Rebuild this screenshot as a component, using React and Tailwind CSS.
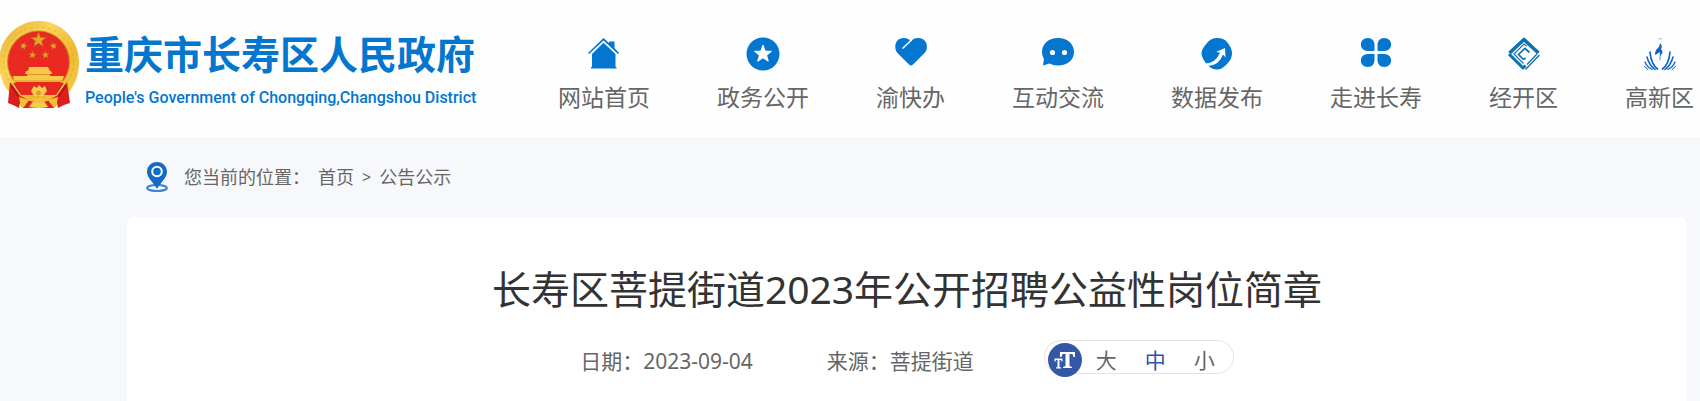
import React from "react";

const STAR = "M0-10 2.4-3.2 9.5-3.1 3.9 1.3 5.9 8.1 0 4.1-5.9 8.1-3.9 1.3-9.5-3.1-2.4-3.2Z";

function Emblem() {
  return (
    <svg viewBox="0 0 80 90" className="h-[90px] w-20 shrink-0" aria-hidden="true">
      <defs>
        <linearGradient id="gold" x1="0" y1="0" x2="1" y2="1">
          <stop offset="0" stopColor="#e3b02c" />
          <stop offset="0.35" stopColor="#fbd45a" />
          <stop offset="0.65" stopColor="#efb931" />
          <stop offset="1" stopColor="#f9d050" />
        </linearGradient>
      </defs>
      <path d="M39 0C61 0 79 18 79 41C79 57 73 68 64 76L58 84H20L14 76C5 68-1 57-1 41C-1 18 17 0 39 0Z" fill="url(#gold)" />
      <circle cx="38.500" cy="41" r="35" fill="none" stroke="#d69a1e" strokeWidth="1" strokeDasharray="3 3" opacity="0.5" />
      <circle cx="38.500" cy="41" r="31.500" fill="#c98b20" />
      <circle cx="38.500" cy="41" r="30.500" fill="#ea2a22" />
      <g fill="#e5a72b" stroke="#b97418" strokeWidth="0.8">
        <path d={STAR} transform="translate(38.500 19) scale(.78)" />
        <path d={STAR} transform="translate(23.500 25) rotate(15) scale(.38)" />
        <path d={STAR} transform="translate(53.500 25) rotate(-15) scale(.38)" />
        <path d={STAR} transform="translate(32.500 34) rotate(8) scale(.38)" />
        <path d={STAR} transform="translate(45.500 34) rotate(-8) scale(.38)" />
      </g>
      <path d="M29 46H48L50 50H51L52 53H25L26 50H28ZM27 54H50V55H64L62 61H14L13 55H27Z" fill="#f7c947" />
      <path d="M27 53.500H50M14 60H63" stroke="#d9962a" strokeWidth="1" />
      <path d="M13 62H64L56 74H21Z" fill="#e52a22" />
      <path d="M10 61L21 76L19 87L13 84L8 82ZM67 61L56 76L58 87L64 84L70 82Z" fill="#dc1f1e" />
      <path d="M11 64L18 75M66 64L59 75" stroke="#b8141a" strokeWidth="2" />
      <path d="M19 74L30 80H47L58 74L54 87H23Z" fill="#df241f" />
      <path d="M19 76L29 79L24 86H21ZM58 76L48 79L53 86H56Z" fill="#f0c03a" />
      <path d="M29 86Q39 70 48 86Q39 88 29 86ZM31 70L34 65L37 67L39 64L42 67L45 65L47 70L43 75H34Z" fill="#f8cd4c" />
      <circle cx="38.500" cy="72" r="2.500" fill="#e39a2b" />
      <path d="M26 77Q38 84 51 77" fill="none" stroke="#f4b83d" strokeWidth="2" />
    </svg>
  );
}

function Svg({ children }) {
  return (
    <svg viewBox="0 0 34 34" className="size-[34px]" fill="#0376cf" aria-hidden="true">
      {children}
    </svg>
  );
}

const HomeIcon = () => (
  <Svg>
    <path d="M1 16L16.500 1L22 6V4.500H27.500V11L32 16L31 17L16.500 3.600L2 17Z" />
    <path d="M16.500 5.800L28.500 17V30H29.500V31.500H4V30H5V17Z" />
  </Svg>
);
const StarIcon = () => (
  <Svg>
    <circle cx="17" cy="17" r="16.500" />
    <path d={STAR} transform="translate(17 17) scale(.86)" fill="#fff" stroke="#fff" strokeWidth="1.500" strokeLinejoin="round" />
  </Svg>
);
const HeartIcon = () => (
  <Svg>
    <path d="M17 28.500Q16 28.500 15 27.500L3.500 16C-.5 11.500.5 1 10 1C13 1 15.500 2.500 17 4C19 2 21 1 24 1C33.500 1 35 11.500 30.500 16L19 27.500Q18 28.500 17 28.500Z" />
    <path d="M9 11L17.500 3" stroke="#fff" strokeWidth="1.700" strokeLinecap="round" />
  </Svg>
);
const ChatIcon = () => (
  <Svg>
    <path d="M17 1C26.500 1 33 7 33 15C33 23 26.500 28.500 17 28.500Q12 28.500 8.500 26.500L2 28.500L3 22Q1 19 1 15C1 7 7.500 1 17 1Z" />
    <circle cx="11.500" cy="15.500" r="2.600" fill="#fff" />
    <circle cx="23.500" cy="15.500" r="2.600" fill="#fff" />
  </Svg>
);
const TrendIcon = () => (
  <Svg>
    <path d="M17 1Q24 1 27 5Q32 11 32 16.500Q32 22 27 27Q22 32.500 17 32.500Q12 32.500 7.500 28Q1.500 21 1.500 16.500Q1.500 12 7 6Q11 1 17 1Z" />
    <path d="M5 26.500Q16 26 20 15.500L16 15L25 11L25.500 20.500L23 17.500Q19 28.500 8 29Z" fill="#fff" />
  </Svg>
);
const CloverIcon = () => (
  <Svg>
    <path d="M9 1C13 1 15.500 4 15.500 8V14H9C-.5 14-.5 1 9 1ZM25 1C34.500 1 34.500 14 25 14H18.500V8C18.500 4 21 1 25 1ZM9 17H15.500V23C15.500 27 13 30 9 30C-.5 30-.5 17 9 17ZM18.500 17H25C34.500 17 34.500 30 25 30C21 30 18.500 27 18.500 23Z" />
  </Svg>
);
const DiamondIcon = () => (
  <Svg>
    <g fill="none" stroke="#0b72b4">
      <path d="M2.500 16L17 2.500L31.500 16" strokeWidth="3.600" strokeLinejoin="round" />
      <path d="M2 17L16 31L18.500 28.500" strokeWidth="3" strokeLinejoin="round" />
      <path d="M32.500 18L18.500 32.500M30 17L20 27.500" strokeWidth="1.300" />
      <path d="M19.500 9L17 7L7 17L16.500 26.500" strokeWidth="1.100" />
      <path d="M22.500 15.500L18 11.500L11.500 17.500L16.500 22.500L18.500 21" strokeWidth="1.700" />
    </g>
  </Svg>
);
const LotusIcon = () => (
  <Svg>
    <g fill="none" stroke="#1262c6" strokeLinecap="round">
      <path d="M7 15Q8 27 14.500 32M27 15Q26 27 19.500 32" strokeWidth="1.700" />
      <path d="M4 20Q6 28 12 32.500M30 20Q28 28 22 32.500" strokeWidth="1.500" />
      <path d="M2 25Q4 30 9 32.500M32 25Q30 30 25 32.500" strokeWidth="1.300" />
      <path d="M1.500 29.500L5 32.500M32.500 29.500L29 32.500" strokeWidth="1" />
    </g>
    <path d="M17 6Q20 9 18 12Q21 15 18 18L16.500 21L17 15L14 17L12 18Q12 13 15 11Q17 9 17 6Z" fill="#1262c6" />
    <path d="M16 22L18.500 19L17 24ZM15.500 1.500H19V2.200H15.500Z" fill="#56a5de" />
  </Svg>
);

const NAV = [
  ["网站首页", HomeIcon],
  ["政务公开", StarIcon],
  ["渝快办", HeartIcon],
  ["互动交流", ChatIcon],
  ["数据发布", TrendIcon],
  ["走进长寿", CloverIcon],
  ["经开区", DiamondIcon],
  ["高新区", LotusIcon],
];

function PinIcon() {
  return (
    <svg viewBox="0 0 22 30" className="h-[30px] w-[22px] shrink-0" aria-hidden="true">
      <ellipse cx="11" cy="26" rx="9.800" ry="3" fill="#fff" stroke="#3b87d3" strokeWidth="2.200" />
      <path d="M11 0C17 0 21 4.500 21 10C21 16 14 21 11 27C8 21 1 16 1 10C1 4.500 5 0 11 0Z" fill="#126bc5" />
      <circle cx="11" cy="9.500" r="4.800" fill="none" stroke="#fff" strokeWidth="2" />
    </svg>
  );
}

function TextSizeIcon() {
  return (
    <svg viewBox="0 0 34 34" className="size-[34px]" aria-hidden="true">
      <circle cx="17" cy="17" r="17" fill="#3457a6" />
      <g fill="#fff">
        <path d="M12 9H27V14H25.500L24.500 11H21.500V23L24 24V25H15V24L17.500 23V11H14.500L13.500 14H12Z" />
        <path d="M6.500 15.500H14.500V18.500H13.500L13 17H11.500V24L13 24.500V25.500H8V24.500L9.500 24V17H8L7.500 18.500H6.500Z" />
      </g>
    </svg>
  );
}

export default function App() {
  return (
    <div className="min-h-screen overflow-x-hidden bg-[#f7f8fc] font-['Noto_Sans','Noto_Sans_CJK_SC',sans-serif] text-[#666]">
      <header className="flex h-[137px] items-start bg-[#fefefe]">
        <a href="#" className="flex shrink-0 items-start gap-[5px] pt-[21px] text-[#0376cf]">
          <Emblem />
          <span className="flex flex-col whitespace-nowrap pt-3">
            <span className="text-[39px] font-bold leading-[42px]">重庆市长寿区人民政府</span>
            <span className="pt-[11px] font-['Roboto','Noto_Sans',sans-serif] text-base font-medium leading-6">
              People's Government of Chongqing,Changshou District
            </span>
          </span>
        </a>
        <nav className="ml-auto flex gap-[67px] pr-1.5 pt-[37px]">
          {NAV.map(([label, Icon]) => (
            <a key={label} href="#" className="flex shrink-0 flex-col items-center gap-2.5">
              <Icon />
              <span className="whitespace-nowrap text-[23px] leading-8">{label}</span>
            </a>
          ))}
        </nav>
      </header>

      <div className="pl-[127px] pr-[13px]">
        <nav aria-label="您当前的位置" className="flex h-20 items-center pl-[19px] text-lg">
          <PinIcon />
          <span className="pl-4">您当前的位置：</span>
          <a href="#" className="pl-2">首页</a>
          <span className="px-2 text-base">&gt;</span>
          <a href="#">公告公示</a>
        </nav>

        <main className="min-h-[184px] rounded-t-lg bg-white pt-11">
          <h1 className="text-center text-[39px] leading-[56px] text-[#333]">
            长寿区菩提街道2023年公开招聘公益性岗位简章
          </h1>
          <div className="flex justify-center pt-[23px] text-[21px] leading-[34px]">
            <span className="pt-1">日期：2023-09-04</span>
            <span className="pl-[74px] pt-1">来源：菩提街道</span>
            <div className="ml-[70px] flex h-[34px] items-start rounded-full border border-[#e4e4e4] pl-[3px] pr-[18px]">
              <span className="h-[34px] pt-0.5">
                <TextSizeIcon />
              </span>
              <div className="flex gap-7 pl-3.5 pt-0.5">
                <button type="button">大</button>
                <button type="button" className="text-[#2c56a8]">中</button>
                <button type="button">小</button>
              </div>
            </div>
          </div>
        </main>
      </div>
    </div>
  );
}
